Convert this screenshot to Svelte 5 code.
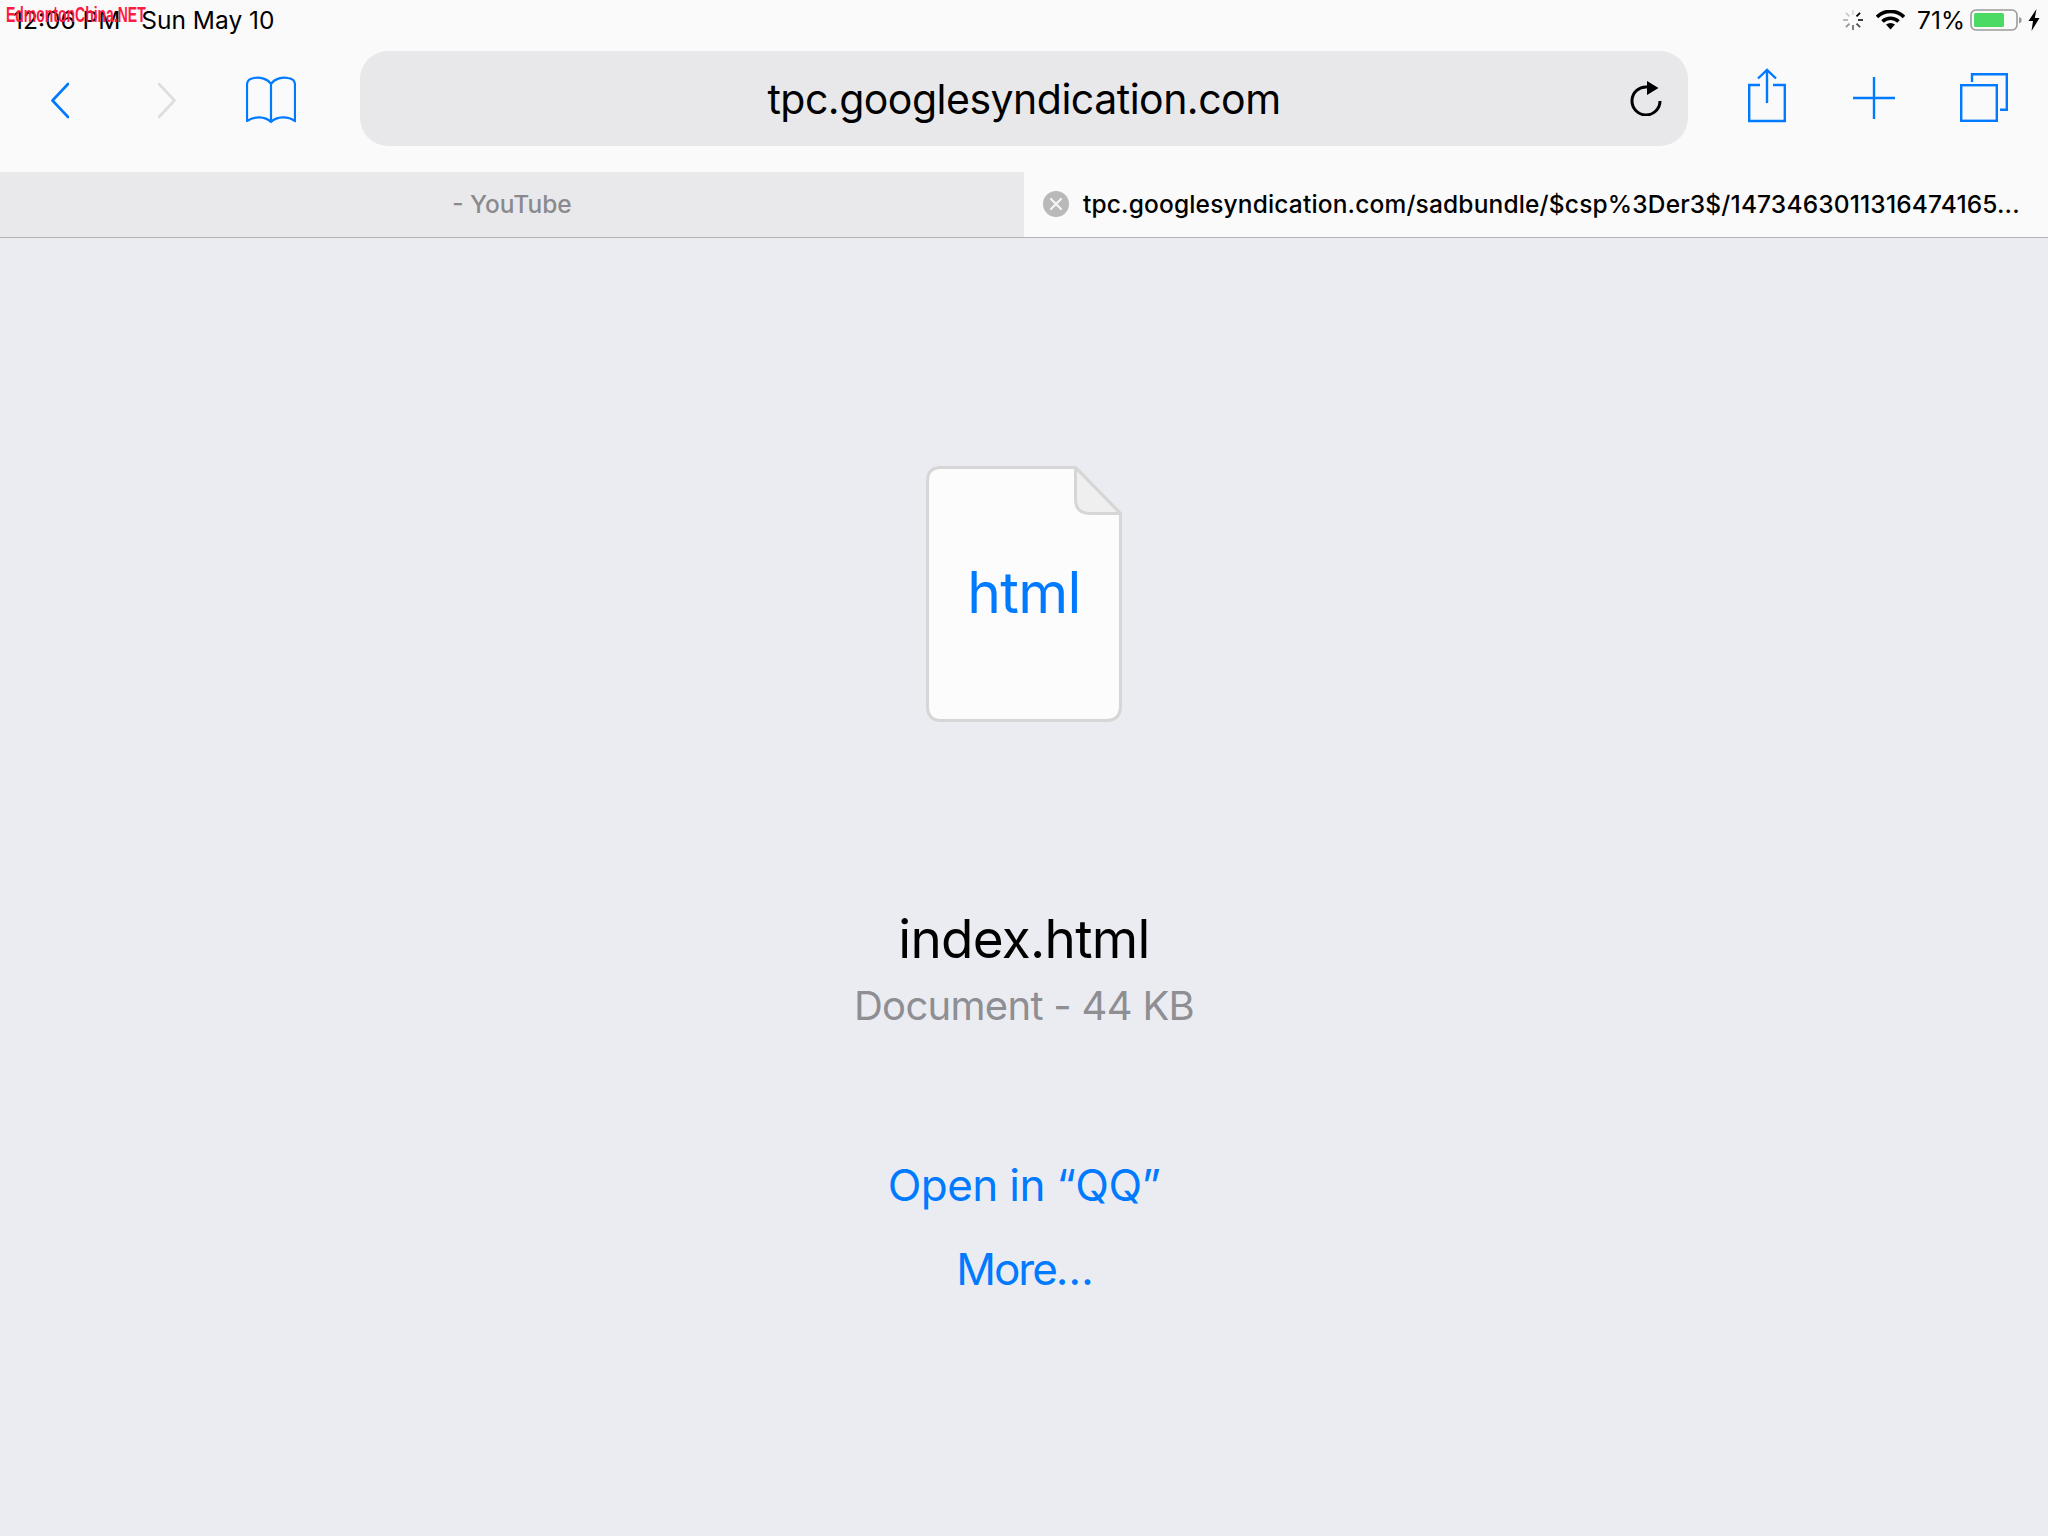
<script>
  const tabs = [
    { title: '- YouTube', active: false },
    { title: 'tpc.googlesyndication.com/sadbundle/$csp%3Der3$/1473463011316474165...', active: true }
  ];
  const spokes = [0, 45, 90, 135, 180, 225, 270, 315];
  const spokeOpacity = [0.12, 1, 0.85, 0.7, 0.55, 0.4, 0.28, 0.18];
</script>

<div class="page">
  <div class="watermark">EdmontonChina.NET</div>

  <!--Status bar-->
  <div class="status">
    <div class="clock">12:06 PM</div>
    <div class="date">Sun May 10</div>
    <div class="spacer"></div>
    <svg class="spin" width="22" height="22" viewBox="-11 -11 22 22">
      {#each spokes as angle, i}
        <line x1="0" y1="-5" x2="0" y2="-10" stroke="#000" stroke-width="1.8" opacity={spokeOpacity[i]} transform="rotate({angle})" />
      {/each}
    </svg>
    <svg class="wifi" width="29" height="20" viewBox="0 0 29 20">
      <path d="M1 7 A19 19 0 0 1 28 7" fill="none" stroke="#000" stroke-width="3.6" />
      <path d="M6.5 11.5 A11.5 11.5 0 0 1 22.5 11.5" fill="none" stroke="#000" stroke-width="3.6" />
      <path d="M10 14.6 A7 7 0 0 1 19 14.6 L14.5 19.6 Z" fill="#000" />
    </svg>
    <div class="percent">71%</div>
    <svg class="battery" width="52" height="22" viewBox="0 0 52 22">
      <rect x="1" y="1" width="46" height="20" rx="5" fill="none" stroke="#9b9b9b" stroke-width="1.6" />
      <rect x="4" y="4" width="30" height="14" rx="1.5" fill="#4cd964" />
      <path d="M49 8 L51.5 9.5 L51.5 13 L49 14.5 Z" fill="#9b9b9b" />
    </svg>
    <svg class="bolt" width="12" height="22" viewBox="0 0 12 22">
      <path d="M8.5 0 L0.5 12 L5 12 L3.5 22 L11.5 9 L6.8 9 Z" fill="#000" />
    </svg>
  </div>

  <!--Toolbar-->
  <div class="toolbar">
    <svg class="back" width="18" height="95" viewBox="0 0 18 95">
      <path d="M17 33 L1.5 49.5 L17 66" fill="none" stroke="#007aff" stroke-width="2.6" stroke-linecap="round" stroke-linejoin="round" />
    </svg>
    <svg class="forward" width="18" height="95" viewBox="0 0 18 95">
      <path d="M1 33 L16.5 49.5 L1 66" fill="none" stroke="#dedede" stroke-width="2.6" stroke-linecap="round" stroke-linejoin="round" />
    </svg>
    <svg class="book" width="50" height="95" viewBox="0 0 50 95">
      <path d="M25 33 C21 27 13 26 8 27 C4 27.5 1 30 1 34 L1 70 C8 65 19 65 25 71 C31 65 42 65 49 70 L49 34 C49 30 46 27.5 42 27 C37 26 29 27 25 33 L25 71" fill="none" stroke="#007aff" stroke-width="2.2" stroke-linejoin="round" />
    </svg>

    <div class="urlbar">
      <div class="host">tpc.googlesyndication.com</div>
      <svg class="reload" width="32" height="36" viewBox="0 0 32 36">
        <path d="M17 7 A14 14 0 1 0 30 21" fill="none" stroke="#000" stroke-width="3" />
        <path d="M17 1 L28.5 8 L17 15 Z" fill="#000" />
      </svg>
    </div>

    <svg class="share" width="38" height="95" viewBox="0 0 38 95">
      <path d="M12 34 L1.2 34 L1.2 70 L36.8 70 L36.8 34 L25 34" fill="none" stroke="#007aff" stroke-width="2.4" />
      <path d="M19 20 L19 52 M10 27.5 L19 19 L28 27.5" fill="none" stroke="#007aff" stroke-width="2.4" />
    </svg>
    <svg class="plus" width="42" height="95" viewBox="0 0 42 95">
      <path d="M21 26 L21 68 M0 47 L42 47" fill="none" stroke="#007aff" stroke-width="2.4" />
    </svg>
    <svg class="copies" width="48" height="95" viewBox="0 0 48 95">
      <rect x="1.2" y="34.2" width="35.6" height="35.6" fill="none" stroke="#007aff" stroke-width="2.4" />
      <path d="M12 31 L12 23.2 L46.8 23.2 L46.8 58.8 L40 58.8" fill="none" stroke="#007aff" stroke-width="2.4" />
    </svg>
  </div>

  <!--Tabs-->
  <div class="tabs">
    {#each tabs as tab}
      <div class="tab" class:active={tab.active}>
        {#if tab.active}
          <svg class="close" width="26" height="26" viewBox="0 0 26 26">
            <circle cx="13" cy="13" r="13" fill="#b9b9b9" />
            <path d="M8 8 L18 18 M18 8 L8 18" stroke="#f6f6f6" stroke-width="2.2" stroke-linecap="round" />
          </svg>
        {/if}
        <span>{tab.title}</span>
      </div>
    {/each}
  </div>

  <!--Download page-->
  <div class="content">
    <div class="doc">
      <svg class="sheet" width="196" height="256" viewBox="0 0 196 256">
        <path d="M15 1.5 L149.5 1.5 L194.5 47.5 L194.5 240 Q194.5 254.5 180 254.5 L15 254.5 Q1.5 254.5 1.5 240 L1.5 15 Q1.5 1.5 15 1.5 Z" fill="#fcfcfc" stroke="#d6d6d6" stroke-width="3" />
        <path d="M149.5 1.5 L149.5 33 Q149.5 47.5 164 47.5 L194.5 47.5 Z" fill="#efeff0" stroke="#d6d6d6" stroke-width="3" stroke-linejoin="round" />
      </svg>
      <span class="ext">html</span>
    </div>
    <div class="name">index.html</div>
    <div class="meta">Document - 44 KB</div>
    <div class="action first">Open in “QQ”</div>
    <div class="action more">More…</div>
  </div>
</div>

<style>
  :global(body) {
    margin: 0;
    background: #ebecf1;
  }

  .page {
    position: relative;
    width: 2048px;
    height: 1536px;
    overflow: hidden;
    background: #ebecf1;
    font-family: Inter, "Liberation Sans", sans-serif;
    color: #000;
  }

  .watermark {
    position: absolute;
    left: 6px;
    top: 2px;
    font-family: "Liberation Sans", sans-serif;
    font-weight: 700;
    font-size: 22px;
    line-height: 26px;
    color: #ff1a44;
    transform: scaleX(0.635);
    transform-origin: left top;
    white-space: nowrap;
  }

  .status {
    display: flex;
    align-items: center;
    height: 40px;
    padding: 0 8px 0 13px;
    box-sizing: border-box;
    background: #fafafa;
    font-size: 24.5px;
  }

  .date {
    margin-left: 21px;
  }

  .spacer {
    flex: 1;
  }

  .wifi {
    margin-left: 12px;
  }

  .percent {
    margin-left: 12px;
  }

  .battery {
    margin-left: 5px;
  }

  .bolt {
    margin-left: 6px;
  }

  .toolbar {
    display: flex;
    align-items: flex-start;
    height: 132px;
    padding: 11px 0 0 51px;
    box-sizing: border-box;
    background: #fafafa;
  }

  .forward {
    margin-left: 89px;
  }

  .book {
    margin-left: 70px;
  }

  .urlbar {
    display: flex;
    align-items: center;
    justify-content: center;
    position: relative;
    width: 1328px;
    height: 95px;
    margin-left: 64px;
    border-radius: 28px;
    background: #e8e8ea;
  }

  .host {
    font-size: 41px;
    letter-spacing: -0.5px;
  }

  .reload {
    position: absolute;
    right: 26px;
    top: 29px;
  }

  .share {
    margin-left: 60px;
  }

  .plus {
    margin-left: 67px;
  }

  .copies {
    margin-left: 65px;
  }

  .tabs {
    display: grid;
    grid-template-columns: 1fr 1fr;
    height: 66px;
    box-sizing: border-box;
    border-bottom: 1px solid #b2b2b2;
  }

  .tab {
    display: flex;
    align-items: center;
    justify-content: center;
    padding-bottom: 1px;
    background: #e9e9eb;
    color: #8a8a8e;
    font-size: 24.5px;
    font-weight: 550;
    white-space: nowrap;
    overflow: hidden;
  }

  .tab.active {
    justify-content: flex-start;
    padding-left: 19px;
    background: #fafafa;
    color: #000;
    letter-spacing: 0.16px;
  }

  .close {
    margin-right: 14px;
    flex: none;
  }

  .content {
    display: flex;
    flex-direction: column;
    align-items: center;
    padding-top: 228px;
  }

  .doc {
    display: flex;
    align-items: center;
    justify-content: center;
    position: relative;
    width: 196px;
    height: 256px;
  }

  .sheet {
    position: absolute;
    left: 0;
    top: 0;
  }

  .ext {
    position: relative;
    top: -2px;
    font-size: 57px;
    letter-spacing: -0.7px;
    color: #007aff;
  }

  .name {
    margin-top: 184px;
    font-size: 53px;
    line-height: 66px;
    letter-spacing: -0.7px;
  }

  .meta {
    margin-top: 9px;
    font-size: 40px;
    line-height: 50px;
    letter-spacing: -0.7px;
    color: #8e8e93;
  }

  .action {
    font-size: 44px;
    line-height: 54px;
    margin-top: 30px;
    letter-spacing: -0.6px;
    color: #007aff;
  }

  .action.first {
    margin-top: 127px;
  }

  .action.more {
    letter-spacing: -2px;
  }
</style>
